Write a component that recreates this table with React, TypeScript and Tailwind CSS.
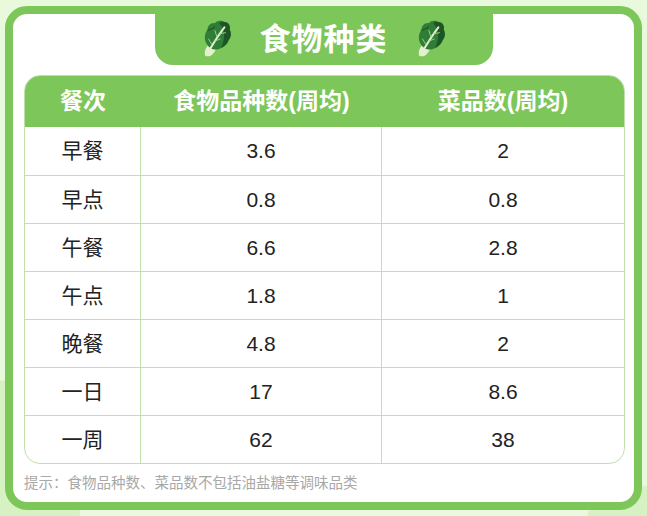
const rows = [
  ["早餐", "3.6", "2"],
  ["早点", "0.8", "0.8"],
  ["午餐", "6.6", "2.8"],
  ["午点", "1.8", "1"],
  ["晚餐", "4.8", "2"],
  ["一日", "17", "8.6"],
  ["一周", "62", "38"],
];

const Cabbage = () => (
  <svg width="30" height="38" viewBox="0 0 28 36">
    <path d="M3 34 C1 30 4 24 9 21 L14 25 C12 31 8 36 3 34 Z" fill="#e6efcf" />
    <path
      d="M6 25 C1 20 2 13 5 9 C5 5 9 2 12 3 C14 0 19 0 21 2 C25 2 27 6 26 9 C28 13 27 17 25 19 C24 24 19 27 14 28 C10 28 8 27 6 25 Z"
      fill="#2f7d36"
    />
    <path d="M21 2 C25 2 27 6 26 9 C28 13 27 17 25 19 C24 22 21 25 18 26 C22 18 22 9 16 3 C17 2 19 1 21 2 Z" fill="#1d5624" />
    <path d="M5 10 C8 8 10 9 12 6" stroke="#1d5624" strokeWidth="1" fill="none" />
    <path d="M4 33 C9 25 14 16 21 7" stroke="#e2f0cf" strokeWidth="1.9" fill="none" strokeLinecap="round" />
    <path d="M9 23 L6 18 M12 20 L17 18 M14 16 L12 10 M17 13 L22 12" stroke="#9fcf8f" strokeWidth="0.9" fill="none" strokeLinecap="round" />
  </svg>
);

export default function App() {
  return (
    <div
      className="relative w-[647px] h-[516px] overflow-hidden bg-[#e9fadc] pt-[6px] pl-[5px]"
      style={{ fontFamily: '"Liberation Sans", "Noto Sans CJK SC", sans-serif' }}
    >
      <div className="absolute -left-[60px] top-[380px] w-[140px] h-[200px] rounded-full bg-[#d6f2c3]" />
      <div className="absolute right-[-30px] bottom-[-40px] w-[90px] h-[70px] rounded-full bg-[#d6f2c3]" />
      <div className="relative w-[637px] h-[504px] rounded-[22px] border-[8px] border-[#7dc65a] bg-white flex flex-col">
        <div className="mx-auto w-[338px] h-[52px] -mt-[1px] bg-[#7dc65a] rounded-b-[18px] flex items-center justify-center gap-[28px]">
          <Cabbage />
          <span className="text-white text-[31px] font-bold tracking-[1px] leading-none">食物种类</span>
          <Cabbage />
        </div>
        <div className="mt-[10px] ml-[11px] w-[601px] rounded-[16px] border border-[#bfe0ab] overflow-hidden">
          <div className="grid grid-cols-[116px_241px_1fr] h-[51px] bg-[#7dc65a] text-white font-bold text-[23px]">
            <div className="flex items-center justify-center">餐次</div>
            <div className="flex items-center justify-center">食物品种数(周均)</div>
            <div className="flex items-center justify-center">菜品数(周均)</div>
          </div>
          {rows.map((r, i) => (
            <div
              key={r[0]}
              className={
                "grid grid-cols-[116px_241px_1fr] h-[48px] text-[21px] text-[#222] " +
                (i > 0 ? "border-t border-[#bfe0ab]" : "")
              }
            >
              <div className="flex items-center justify-center border-r border-[#bfe0ab]">{r[0]}</div>
              <div className="flex items-center justify-center border-r border-[#bfe0ab]">{r[1]}</div>
              <div className="flex items-center justify-center">{r[2]}</div>
            </div>
          ))}
        </div>
        <div className="mt-[9px] ml-[11px] text-[14.5px] text-[#a8a8a8]">提示：食物品种数、菜品数不包括油盐糖等调味品类</div>
      </div>
    </div>
  );
}
